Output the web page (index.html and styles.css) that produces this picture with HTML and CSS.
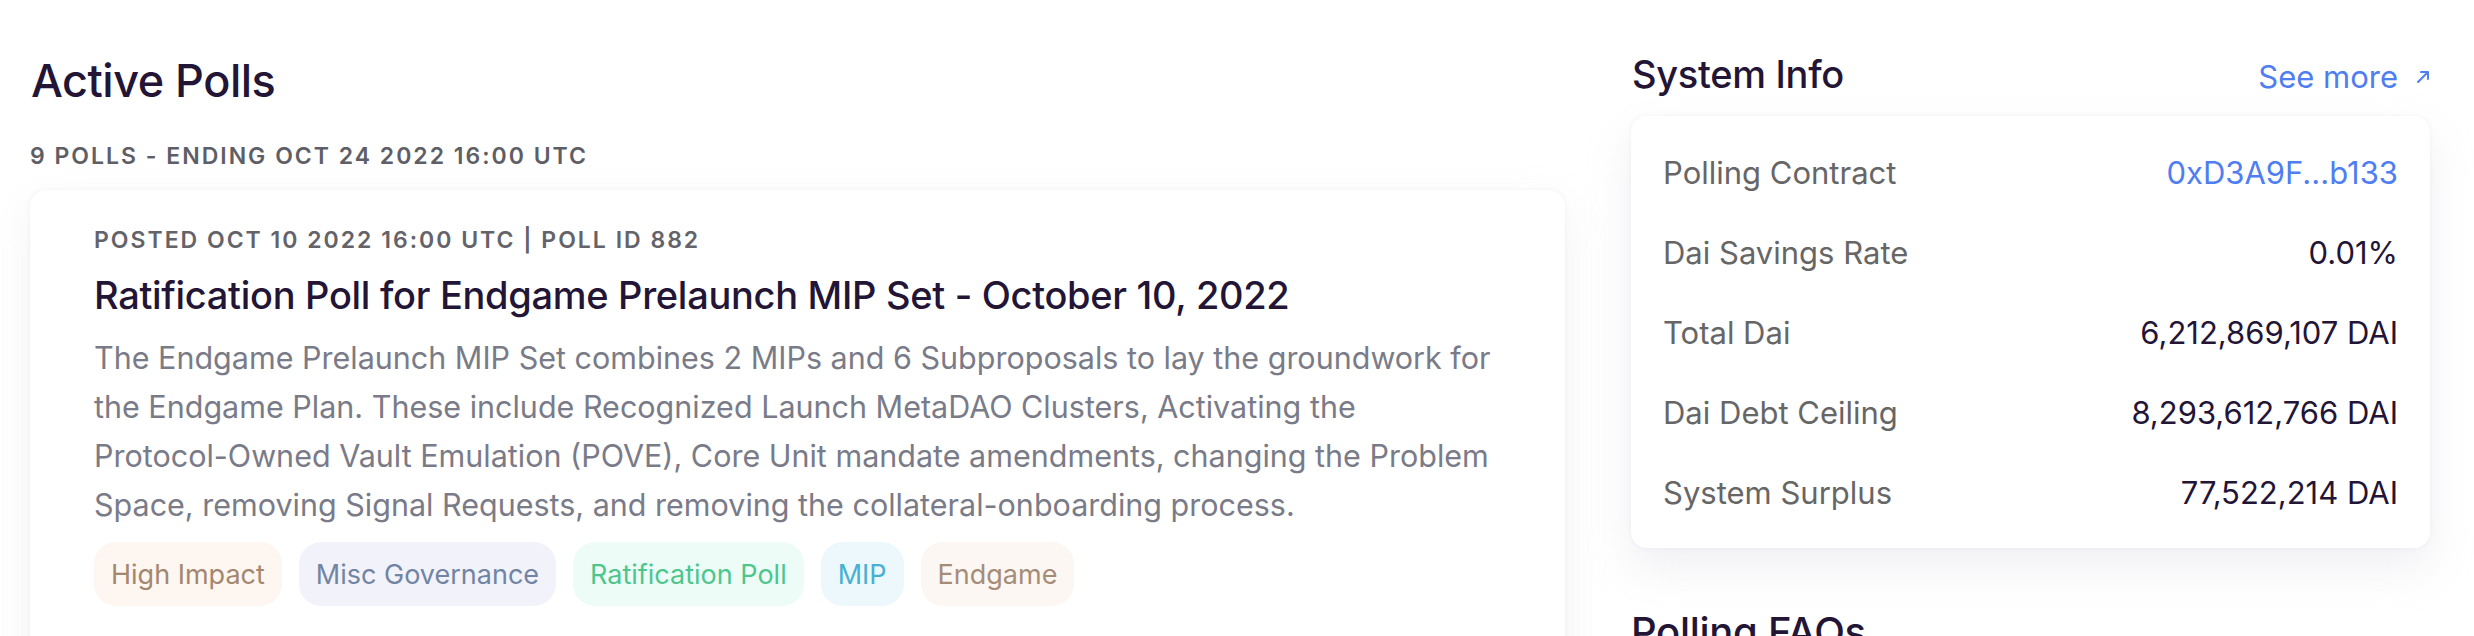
FILE: index.html
```html
<!DOCTYPE html>
<html>
<head>
<meta charset="utf-8">
<link rel="stylesheet" href="styles.css">
</head>
<body>
<div class="page">
  <main class="main">
    <h1 class="page-title">Active Polls</h1>
    <div class="polls-meta">9 POLLS - ENDING OCT 24 2022 16:00 UTC</div>
    <article class="poll-card">
      <div class="poll-meta">POSTED OCT 10 2022 16:00 UTC | POLL ID 882</div>
      <h2 class="poll-title">Ratification Poll for Endgame Prelaunch MIP Set - October 10, 2022</h2>
      <p class="poll-desc">The Endgame Prelaunch MIP Set combines 2 MIPs and 6 Subproposals to lay the groundwork for the Endgame Plan. These include Recognized Launch MetaDAO Clusters, Activating the <span class="nowrap">Protocol-Owned</span> Vault Emulation (POVE), Core Unit mandate amendments, changing the Problem Space, removing Signal Requests, and removing the collateral-onboarding process.</p>
      <div class="tags">
        <span class="tag tag-impact">High Impact</span>
        <span class="tag tag-misc">Misc Governance</span>
        <span class="tag tag-ratif">Ratification Poll</span>
        <span class="tag tag-mip">MIP</span>
        <span class="tag tag-endgame">Endgame</span>
      </div>
    </article>
  </main>
  <aside class="side">
    <div class="side-head">
      <h3 class="side-title">System Info</h3>
      <a class="see-more">See more
        <svg class="arrow" width="14" height="14" viewBox="0 0 14 14"><path d="M2 12 L12 2 M5 2 H12 V9" fill="none" stroke="#4f7df2" stroke-width="2" stroke-linecap="round" stroke-linejoin="round"/></svg>
      </a>
    </div>
    <div class="info-card">
      <div class="row"><span class="label">Polling Contract</span><span class="value link">0xD3A9F...b133</span></div>
      <div class="row"><span class="label">Dai Savings Rate</span><span class="value">0.01%</span></div>
      <div class="row"><span class="label">Total Dai</span><span class="value">6,212,869,107 DAI</span></div>
      <div class="row"><span class="label">Dai Debt Ceiling</span><span class="value">8,293,612,766 DAI</span></div>
      <div class="row"><span class="label">System Surplus</span><span class="value">77,522,214 DAI</span></div>
    </div>
    <h3 class="side-title faq">Polling FAQs</h3>
  </aside>
</div>
</body>
</html>
```
FILE: styles.css
```css
html, body {
  margin: 0;
  padding: 0;
  background: #ffffff;
  font-family: Inter, "Noto Sans", sans-serif;
  color: #231536;
  overflow: hidden;
}
.page {
  display: flex;
  gap: 66px;
  padding: 0 44px 0 30px;
  width: 2474px;
  box-sizing: border-box;
}
.main {
  width: 1535px;
  flex: none;
}
.side {
  width: 799px;
  flex: none;
  padding-top: 50px;
}
.page-title {
  margin: 53px 0 0 1px;
  font-size: 45px;
  font-weight: 500;
  line-height: 56px;
  letter-spacing: -0.5px;
}
.polls-meta {
  margin-top: 32px;
  font-size: 23px;
  font-weight: 600;
  letter-spacing: 2px;
  color: #5e5e66;
  line-height: 30px;
}
.poll-card {
  margin-top: 19px;
  background: #fff;
  border-radius: 16px;
  box-shadow: 0 0 4px rgba(190, 190, 205, 0.18), 0 16px 40px rgba(200, 200, 215, 0.22);
  padding: 35px 64px 40px;
  height: 500px;
  box-sizing: border-box;
}
.poll-meta {
  font-size: 23px;
  font-weight: 600;
  letter-spacing: 2px;
  color: #636369;
  line-height: 30px;
}
.poll-title {
  margin: 16px 0 0;
  font-size: 38px;
  font-weight: 500;
  line-height: 48px;
  letter-spacing: -0.3px;
}
.poll-desc {
  margin: 14px 0 0;
  font-size: 30.5px;
  line-height: 49px;
  color: #7a7b88;
  max-width: 1410px;
}
.nowrap { white-space: nowrap; }
.tags {
  display: flex;
  gap: 17px;
  margin-top: 13px;
}
.tag {
  display: inline-flex;
  align-items: center;
  height: 64px;
  padding: 0 17px;
  border-radius: 22px;
  font-size: 27px;
}
.tag-impact { background: #fdf6f1; color: #a3876f; }
.tag-misc { background: #f2f3fa; color: #7184a3; }
.tag-ratif { background: #edfcf6; color: #4dc68e; }
.tag-mip { background: #edf8fc; color: #47b0d3; }
.tag-endgame { background: #fdf7f3; color: #a58c79; }

.side-head {
  display: flex;
  justify-content: space-between;
  align-items: center;
  height: 48px;
  margin-left: 1px;
}
.side-title {
  margin: 0;
  font-size: 38px;
  font-weight: 500;
  line-height: 48px;
  letter-spacing: -0.3px;
}
.see-more {
  display: flex;
  align-items: center;
  gap: 18px;
  font-size: 31px;
  color: #4f7df2;
  padding-top: 4px;
}
.arrow { margin-top: 2px; }
.info-card {
  margin-top: 18px;
  background: #fff;
  border-radius: 16px;
  box-shadow: 0 0 4px rgba(190, 190, 205, 0.18), 0 20px 44px rgba(200, 200, 215, 0.28);
  padding: 16px 32px;
}
.row {
  display: flex;
  justify-content: space-between;
  align-items: center;
  height: 80px;
  font-size: 31px;
}
.label { color: #666666; }
.value { color: #231536; }
.value.link { color: #4f7df2; }
.faq {
  margin-top: 60px;
  font-size: 40px;
}
```
